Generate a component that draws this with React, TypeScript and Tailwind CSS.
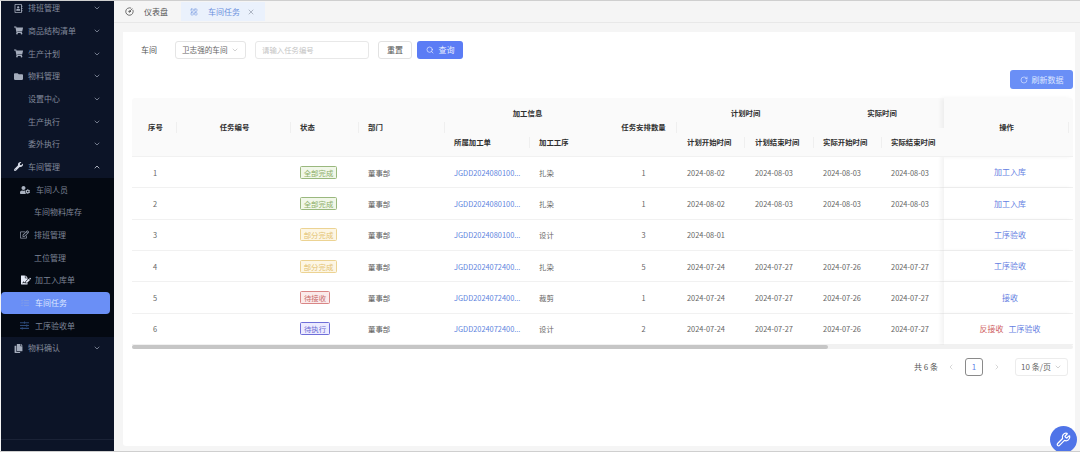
import React from "react";
import { ChevronDown, ChevronUp, ChevronLeft, ChevronRight, RotateCw, Search, Wrench, X, CircleGauge, LayoutGrid } from "lucide-react";
import { FaShoppingCart, FaFolder, FaWrench, FaUserCog, FaRegEdit, FaFileSignature, FaTasks, FaSlidersH, FaCopy, FaRegAddressBook } from "react-icons/fa";

type Item = { label: string; icon?: React.ReactNode; chevron?: "down" | "up" };

const top1: Item[] = [
  { label: "排班管理", icon: <FaRegAddressBook className="text-[9px]" />, chevron: "down" },
  { label: "商品结构清单", icon: <FaShoppingCart className="text-[9px]" />, chevron: "down" },
  { label: "生产计划", icon: <FaShoppingCart className="text-[9px]" />, chevron: "down" },
  { label: "物料管理", icon: <FaFolder className="text-[9px]" />, chevron: "down" },
  { label: "设置中心", chevron: "down" },
  { label: "生产执行", chevron: "down" },
  { label: "委外执行", chevron: "down" },
  { label: "车间管理", icon: <FaWrench className="text-[9px] text-[#d5dae6]" />, chevron: "up" },
];

const MenuRow = ({ item }: { item: Item }) => (
  <div className="flex h-[22.67px] items-center pl-[13px] pr-[13px]">
    <span className="flex w-[14px] shrink-0 items-center text-[#a4acbc]">{item.icon}</span>
    <span className="flex-1 text-[8px] text-[#838b9c]">{item.label}</span>
    {item.chevron === "down" ? (
      <ChevronDown size={8} strokeWidth={2.4} className="text-[#8a92a3]" />
    ) : (
      <ChevronUp size={8} strokeWidth={2.4} className="text-[#cfd4df]" />
    )}
  </div>
);

const SubRow = ({ icon, label, indent, gap, active }: { icon?: React.ReactNode; label: string; indent: string; gap: string; active?: boolean }) => (
  <div className={`flex h-[22.67px] items-center ${active ? "mr-[4px] rounded-[4px] bg-[#6a8ff6]" : ""} ${indent}`}>
    {icon && <span className={`flex shrink-0 items-center ${gap}`}>{icon}</span>}
    <span className={`text-[8px] ${active ? "text-[#dfe8ff]" : "text-[#7d8596]"}`}>{label}</span>
  </div>
);

const Sidebar = () => (
  <aside className="ml-px flex w-[113px] shrink-0 flex-col overflow-hidden bg-[#0c1427]">
    <div className="-mt-[4px]">
      {top1.map((i) => (
        <MenuRow key={i.label} item={i} />
      ))}
    </div>
    <div className="bg-[#040912]">
      <SubRow indent="pl-[19px]" gap="w-[16px]" icon={<FaUserCog className="text-[10px] text-[#aab2c0]" />} label="车间人员" />
      <SubRow indent="pl-[33px]" gap="" label="车间物料库存" />
      <SubRow indent="pl-[19px]" gap="w-[14px]" icon={<FaRegEdit className="text-[9px] text-[#8f98a8]" />} label="排班管理" />
      <SubRow indent="pl-[33px]" gap="" label="工位管理" />
      <SubRow indent="pl-[20px]" gap="w-[14px]" icon={<FaFileSignature className="text-[10px] text-[#e6ebf7]" />} label="加工入库单" />
      <SubRow active indent="pl-[20px]" gap="w-[14px]" icon={<FaTasks className="text-[8px] text-[#7f9be8]" />} label="车间任务" />
      <SubRow indent="pl-[19px]" gap="w-[15px]" icon={<FaSlidersH className="text-[9px] text-[#2d4a78]" />} label="工序验收单" />
    </div>
    <MenuRow item={{ label: "物料确认", icon: <FaCopy className="text-[9px]" />, chevron: "down" }} />
    <div className="flex-1" />
    <div className="h-[12px] border-t border-[#1a2236]" />
  </aside>
);

const Tag = ({ kind }: { kind: string }) => {
  const map: Record<string, string> = {
    全部完成: "w-[37px] border-[#9ab87e] bg-[#f1f7e9] text-[#8cae68]",
    部分完成: "w-[37px] border-[#ecd393] bg-[#fdf6e4] text-[#e3c271]",
    待接收: "w-[30px] border-[#d98686] bg-[#fbeaea] text-[#c86a6a]",
    待执行: "w-[30px] border-[#6f6fd8] bg-[#ecebff] text-[#6a6ad2]",
  };
  return (
    <span className={`inline-flex h-[13px] items-center justify-center rounded-[1.5px] border text-[7.4px] ${map[kind]}`}>{kind}</span>
  );
};

const Sep = ({ y = "top-[24px]", x = "right-0" }: { y?: string; x?: string }) => (
  <span className={`absolute h-[11px] w-px bg-[#efefef] ${x} ${y}`} />
);

const rows = [
  ["1", "全部完成", "JGDD2024080100...", "扎染", "1", "2024-08-02", "2024-08-03", "2024-08-03", "2024-08-03", ["加工入库"]],
  ["2", "全部完成", "JGDD2024080100...", "扎染", "1", "2024-08-02", "2024-08-03", "2024-08-03", "2024-08-03", ["加工入库"]],
  ["3", "部分完成", "JGDD2024080100...", "设计", "3", "2024-08-01", "", "", "", ["工序验收"]],
  ["4", "部分完成", "JGDD2024072400...", "扎染", "5", "2024-07-24", "2024-07-27", "2024-07-26", "2024-07-27", ["工序验收"]],
  ["5", "待接收", "JGDD2024072400...", "裁剪", "1", "2024-07-24", "2024-07-27", "2024-07-26", "2024-07-27", ["接收"]],
  ["6", "待执行", "JGDD2024072400...", "设计", "2", "2024-07-24", "2024-07-27", "2024-07-26", "2024-07-27", ["反接收", "工序验收"]],
] as const;

const th = "relative bg-[#fafafa] text-[7.4px] font-bold text-[#2f2f2f]";
const td = "border-b border-[#f1f1f1] text-[7.4px]";
const gray = "text-[#666]";

const Table = () => (
  <table className="w-[941px] table-fixed border-separate border-spacing-0">
    <colgroup>
      <col className="w-[45px]" />
      <col className="w-[114px]" />
      <col className="w-[68px]" />
      <col className="w-[86px]" />
      <col className="w-[85px]" />
      <col className="w-[80px]" />
      <col className="w-[67px]" />
      <col className="w-[68px]" />
      <col className="w-[69px]" />
      <col className="w-[68px]" />
      <col className="w-[62px]" />
      <col className="w-[129px]" />
    </colgroup>
    <thead>
      <tr className="h-[30px]">
        <th rowSpan={2} className={`${th} rounded-tl-[3px] border-b border-[#f1f1f1] pl-[2px] text-center`}>序号<Sep /></th>
        <th rowSpan={2} className={`${th} border-b border-[#f1f1f1] pl-[1px] text-center`}>任务编号<Sep /></th>
        <th rowSpan={2} className={`${th} border-b border-[#f1f1f1] pl-[9px] text-left`}>状态<Sep /></th>
        <th rowSpan={2} className={`${th} border-b border-[#f1f1f1] pl-[9px] text-left`}>部门<Sep /></th>
        <th colSpan={2} className={`${th} text-center`}>加工信息</th>
        <th rowSpan={2} className={`${th} border-b border-[#f1f1f1] text-center`}>任务安排数量<Sep /></th>
        <th colSpan={2} className={`${th} text-center`}>计划时间</th>
        <th colSpan={2} className={`${th} pl-[6px] text-center`}>实际时间</th>
        <th rowSpan={2} className={`${th} rounded-tr-[3px] border-b border-[#f1f1f1] pr-[4px] text-center shadow-[-3px_0_4px_rgba(0,0,0,0.05)]`}>操作<Sep x="right-[4px]" /></th>
      </tr>
      <tr className="h-[29px]">
        <th className={`${th} border-b border-[#f1f1f1] pl-[9px] text-left`}>所属加工单<Sep y="top-[9px]" /></th>
        <th className={`${th} border-b border-[#f1f1f1] pl-[9px] text-left`}>加工工序</th>
        <th className={`${th} border-b border-[#f1f1f1] pl-[10px] text-left`}>计划开始时间<Sep y="top-[9px]" /></th>
        <th className={`${th} border-b border-[#f1f1f1] pl-[10px] text-left`}>计划结束时间<Sep y="top-[9px]" /></th>
        <th className={`${th} border-b border-[#f1f1f1] pl-[9px] text-left`}>实际开始时间<Sep y="top-[9px]" /></th>
        <th className={`${th} border-b border-[#f1f1f1] pl-[9px] text-left`}>实际结束时间</th>
      </tr>
    </thead>
    <tbody>
      {rows.map((r) => (
        <tr key={r[0]} className="h-[31.35px]">
          <td className={`${td} ${gray} pl-[1px] text-center`}>{r[0]}</td>
          <td className={td} />
          <td className={`${td} pl-[9px]`}><Tag kind={r[1]} /></td>
          <td className={`${td} pl-[9px] text-[#5e5e5e]`}>董事部</td>
          <td className={`${td} pl-[9px] text-[#5f85de]`}>{r[2]}</td>
          <td className={`${td} ${gray} pl-[9px]`}>{r[3]}</td>
          <td className={`${td} ${gray} text-center`}>{r[4]}</td>
          <td className={`${td} ${gray} pl-[10px]`}>{r[5]}</td>
          <td className={`${td} ${gray} pl-[10px]`}>{r[6]}</td>
          <td className={`${td} ${gray} pl-[9px]`}>{r[7]}</td>
          <td className={`${td} ${gray} pl-[9px]`}>{r[8]}</td>
          <td className="border-b border-[#f1f1f1] bg-white pl-[3px] text-center text-[8px] shadow-[-3px_0_4px_rgba(0,0,0,0.05)]">
            {r[9].map((a) => (
              <span key={a} className={`mx-[2.5px] ${a === "反接收" ? "text-[#cf5f5f]" : "text-[#6580e2]"}`}>{a}</span>
            ))}
          </td>
        </tr>
      ))}
    </tbody>
  </table>
);

export default function App() {
  return (
    <div className="relative flex h-[452px] w-[1080px] overflow-hidden border-y border-[#cfcfcf] bg-[#f5f5f5] font-['Noto_Sans_CJK_SC','Noto_Sans',sans-serif]">
      <Sidebar />
      <main className="flex min-w-0 flex-1 flex-col">
        <div className="flex h-[22px] shrink-0 items-center border-b border-[#e8e8e8] pl-[11px]">
          <CircleGauge size={9} className="mr-[10px] text-[#444]" />
          <span className="mr-[13px] text-[8px] text-[#555]">仪表盘</span>
          <div className="flex h-[19px] w-[84px] items-center bg-[#eaf1fc] pl-[9px] text-[#6a90dc]">
            <LayoutGrid size={8} strokeWidth={1.5} className="mr-[10px]" />
            <span className="text-[8px]">车间任务</span>
            <X size={8} className="ml-[7px] text-[#8f99a8]" />
          </div>
        </div>
        <div className="min-h-0 flex-1 pb-[5px] pl-[9px] pr-[5px] pt-[9px]">
          <section className="h-full rounded-b-[3px] bg-white pl-[9px] pr-[2px] pt-[9px]">
            <div className="flex h-[18px] items-center">
              <span className="ml-[9px] w-[34px] text-[8px] text-[#555]">车间</span>
              <div className="flex h-[18px] w-[71px] items-center rounded-[3px] border border-[#e5e5e5] pl-[6px] text-[7.6px] text-[#666]">
                卫志强的车间
                <ChevronDown size={8} className="ml-[3px] text-[#bbb]" />
              </div>
              <div className="ml-[9px] flex h-[18px] w-[114px] items-center rounded-[3px] border border-[#e8e8e8] pl-[6px] text-[7.4px] text-[#c4c4c4]">请输入任务编号</div>
              <div className="ml-[9px] flex h-[18px] w-[34px] items-center justify-center rounded-[3px] border border-[#e2e2e2] text-[8px] text-[#555]">重置</div>
              <div className="ml-[5px] flex h-[18px] w-[46px] items-center justify-center rounded-[3px] bg-[#5b7cf5] text-[8px] text-[#e8edff]">
                <Search size={8} className="mr-[5px]" />查询
              </div>
            </div>
            <div className="mt-[11px] flex justify-end">
              <div className="flex h-[19px] w-[63px] items-center justify-center rounded-[3px] bg-[#6a8ff6] text-[8px] text-[#dde6ff]">
                <RotateCw size={8} className="mr-[4px]" />刷新数据
              </div>
            </div>
            <div className="mt-[9px]">
              <Table />
              <div className="h-[4px] w-[941px] rounded-full bg-[#f1f1f1]">
                <div className="h-full w-[696px] rounded-full bg-[#c6c6c6]" />
              </div>
            </div>
            <div className="mt-[8px] flex h-[20px] w-[936px] items-center justify-end text-[8px] text-[#555]">
              <span>共 6 条</span>
              <ChevronLeft size={8} className="ml-[9px] text-[#c4c4c4]" />
              <span className="ml-[10px] flex h-[18px] w-[18px] items-center justify-center rounded-[3px] border border-[#8a8a8a] text-[#5f7fe8]">1</span>
              <ChevronRight size={8} className="ml-[10px] text-[#c4c4c4]" />
              <div className="ml-[14px] flex h-[18px] w-[53px] items-center justify-center rounded-[3px] border border-[#ececec] text-[#666]">
                10 条/页
                <ChevronDown size={8} className="ml-[3px] text-[#bbb]" />
              </div>
            </div>
          </section>
        </div>
      </main>
      <div className="absolute left-[1050px] top-[425px] flex h-[27px] w-[27px] items-center justify-center rounded-full bg-[#4f74e8]">
        <Wrench size={15} className="text-white" />
      </div>
    </div>
  );
}
